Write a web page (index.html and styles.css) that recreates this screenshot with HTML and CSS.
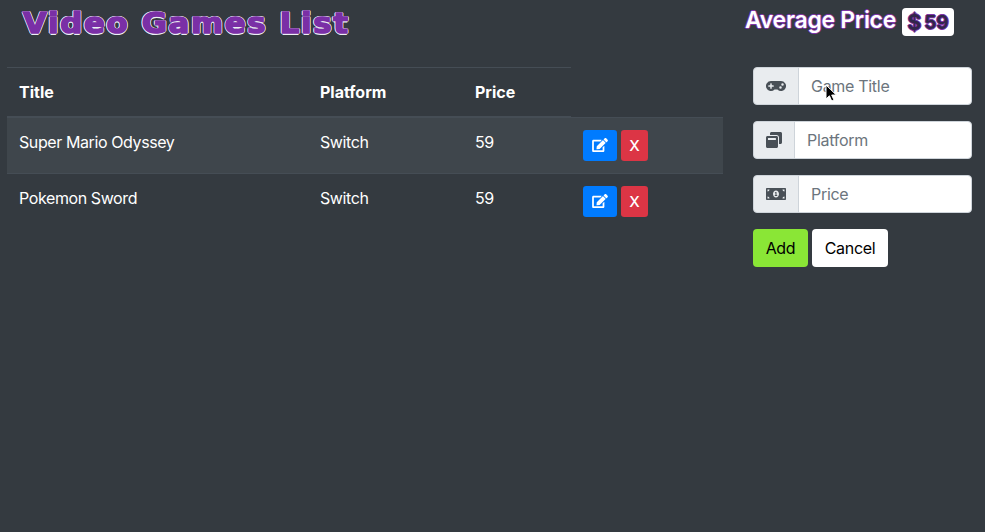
FILE: index.html
```html
<!doctype html>
<html lang="en">
<head>
  <title>Video Games List</title>
  <meta charset="utf-8">
  <link rel="stylesheet" href="styles.css">
</head>
<body>

<header class="top-bar">
  <h1 class="app-title">Video Games List</h1>
  <div class="average">
    <span class="average-label">Average Price</span>
    <span class="average-badge"><span class="dollar">$</span>59</span>
  </div>
</header>

<main class="content">
  <table class="games">
    <colgroup>
      <col class="col-title">
      <col class="col-platform">
      <col class="col-price">
      <col class="col-actions">
    </colgroup>
    <thead>
      <tr>
        <th>Title</th>
        <th>Platform</th>
        <th>Price</th>
      </tr>
    </thead>
    <tbody>
      <tr class="hovered">
        <td>Super Mario Odyssey</td>
        <td>Switch</td>
        <td>59</td>
        <td>
          <div class="actions">
            <button class="btn btn-edit" type="button" aria-label="Edit">
              <svg class="icon-edit" viewBox="0 0 576 512"><path d="M402.6 83.2l90.2 90.2c3.8 3.8 3.8 10 0 13.8L274.4 405.6l-92.8 10.3c-12.4 1.4-22.9-9.1-21.5-21.5l10.3-92.8L388.8 83.2c3.8-3.8 10-3.8 13.8 0zm162-22.9l-48.8-48.8c-15.2-15.2-39.9-15.2-55.2 0l-35.4 35.4c-3.8 3.8-3.8 10 0 13.8l90.2 90.2c3.8 3.8 10 3.8 13.8 0l35.4-35.4c15.2-15.3 15.2-40 0-55.2zM384 346.2V448H64V128h229.8c3.2 0 6.2-1.3 8.5-3.5l40-40c7.6-7.6 2.2-20.5-8.5-20.5H48C21.5 64 0 85.5 0 112v352c0 26.5 21.5 48 48 48h352c26.5 0 48-21.5 48-48V306.2c0-10.7-12.9-16-20.5-8.5l-40 40c-2.2 2.3-3.5 5.3-3.5 8.5z"/></svg>
            </button>
            <button class="btn btn-delete" type="button">X</button>
          </div>
        </td>
      </tr>
      <tr>
        <td>Pokemon Sword</td>
        <td>Switch</td>
        <td>59</td>
        <td>
          <div class="actions">
            <button class="btn btn-edit" type="button" aria-label="Edit">
              <svg class="icon-edit" viewBox="0 0 576 512"><path d="M402.6 83.2l90.2 90.2c3.8 3.8 3.8 10 0 13.8L274.4 405.6l-92.8 10.3c-12.4 1.4-22.9-9.1-21.5-21.5l10.3-92.8L388.8 83.2c3.8-3.8 10-3.8 13.8 0zm162-22.9l-48.8-48.8c-15.2-15.2-39.9-15.2-55.2 0l-35.4 35.4c-3.8 3.8-3.8 10 0 13.8l90.2 90.2c3.8 3.8 10 3.8 13.8 0l35.4-35.4c15.2-15.3 15.2-40 0-55.2zM384 346.2V448H64V128h229.8c3.2 0 6.2-1.3 8.5-3.5l40-40c7.6-7.6 2.2-20.5-8.5-20.5H48C21.5 64 0 85.5 0 112v352c0 26.5 21.5 48 48 48h352c26.5 0 48-21.5 48-48V306.2c0-10.7-12.9-16-20.5-8.5l-40 40c-2.2 2.3-3.5 5.3-3.5 8.5z"/></svg>
            </button>
            <button class="btn btn-delete" type="button">X</button>
          </div>
        </td>
      </tr>
    </tbody>
  </table>

  <form class="game-form">
    <div class="input-group">
      <span class="addon">
        <svg class="icon-addon" viewBox="0 0 640 512"><path d="M480.07 96H160a160 160 0 1 0 114.24 272h91.52A160 160 0 1 0 480.07 96zM248 268a12 12 0 0 1-12 12h-52v52a12 12 0 0 1-12 12h-24a12 12 0 0 1-12-12v-52H84a12 12 0 0 1-12-12v-24a12 12 0 0 1 12-12h52v-52a12 12 0 0 1 12-12h24a12 12 0 0 1 12 12v52h52a12 12 0 0 1 12 12zm216 76a40 40 0 1 1 40-40 40 40 0 0 1-40 40zm64-96a40 40 0 1 1 40-40 40 40 0 0 1-40 40z"/></svg>
      </span>
      <input type="text" placeholder="Game Title">
      <svg class="cursor" viewBox="0 0 12 18"><path d="M1 1v14l3.4-3.2 2.3 5.2 2.3-1-2.3-5h4.6z" stroke="#fff" stroke-width="1"/></svg>
    </div>
    <div class="input-group">
      <span class="addon">
        <svg class="icon-addon icon-window" viewBox="0 0 512 512"><path d="M512 48v288c0 26.5-21.5 48-48 48h-48V176c0-44.1-35.9-80-80-80H128V48c0-26.5 21.5-48 48-48h288c26.5 0 48 21.5 48 48zM384 176v288c0 26.5-21.5 48-48 48H48c-26.5 0-48-21.5-48-48V176c0-26.5 21.5-48 48-48h288c26.5 0 48 21.5 48 48zm-68 28c0-6.6-5.4-12-12-12H76c-6.6 0-12 5.4-12 12v52h252v-52z"/></svg>
      </span>
      <input type="text" placeholder="Platform">
    </div>
    <div class="input-group">
      <span class="addon">
        <svg class="icon-addon" viewBox="0 0 640 512"><path d="M352 288h-16v-88c0-4.42-3.58-8-8-8h-13.58c-4.74 0-9.37 1.4-13.31 4.03l-15.33 10.22a7.994 7.994 0 0 0-2.22 11.09l8.88 13.31a7.994 7.994 0 0 0 11.09 2.22l.47-.31V288h-16c-4.42 0-8 3.58-8 8v16c0 4.42 3.58 8 8 8h64c4.42 0 8-3.58 8-8v-16c0-4.42-3.58-8-8-8zM608 64H32C14.33 64 0 78.33 0 96v320c0 17.67 14.33 32 32 32h576c17.67 0 32-14.33 32-32V96c0-17.67-14.33-32-32-32zM48 400v-64c35.35 0 64 28.65 64 64H48zm0-224v-64h64c0 35.35-28.65 64-64 64zm272 192c-53 0-96-50.15-96-112 0-61.86 43-112 96-112s96 50.14 96 112c0 61.87-43.02 112-96 112zm272 32h-64c0-35.35 28.65-64 64-64v64zm0-224c-35.35 0-64-28.65-64-64h64v64z"/></svg>
      </span>
      <input type="text" placeholder="Price">
    </div>
    <div class="form-buttons">
      <button class="btn-form btn-add" type="button">Add</button>
      <button class="btn-form btn-cancel" type="button">Cancel</button>
    </div>
  </form>
</main>

</body>
</html>
```

FILE: styles.css
```css
:root {
  --background-color: #343a40;
  --border-color: #454d55;
  --hover-color: #3f464c;
  --accent-purple: #7a2fa6;
}
html {
  box-sizing: border-box;
  font-family: Inter, "Liberation Sans", Arial, sans-serif;
  font-size: 16px;
}
*, *:before, *:after {
  box-sizing: inherit;
}
body {
  margin: 0;
  height: 532px;
  overflow: hidden;
  background-color: var(--background-color);
  color: #fff;
}
.top-bar {
  display: flex;
  justify-content: space-between;
  align-items: flex-start;
  height: 67px;
  padding: 8px 31px 0 23px;
}
.app-title {
  margin: 0;
  font-family: "DejaVu Sans", sans-serif;
  font-size: 29px;
  font-weight: 700;
  line-height: 30px;
  letter-spacing: 1.6px;
  color: var(--accent-purple);
  transform: scaleX(1.06);
  transform-origin: left center;
  -webkit-text-stroke: 1.6px var(--accent-purple);
  text-shadow: 1px 1px 0 #eef0f5, -1px 1px 0 #eef0f5, 1px -1px 0 #eef0f5, -1px -1px 0 #eef0f5, 1.5px 0 0 #eef0f5, -1.5px 0 0 #eef0f5, 0 1.5px 0 #eef0f5, 0 -1.5px 0 #eef0f5;
}
.average {
  display: flex;
  align-items: flex-start;
  gap: 6px;
}
.average-label {
  font-size: 23px;
  font-weight: 600;
  line-height: 24px;
  letter-spacing: -0.3px;
  color: #fff;
  text-shadow: 1px 0 0 #7f35a8, -1px 0 0 #7f35a8, 0 1px 0 #7f35a8, 0 -1px 0 #7f35a8;
}
.average-badge {
  display: flex;
  align-items: center;
  justify-content: center;
  gap: 3px;
  width: 52px;
  height: 28px;
  background-color: #fff;
  border-radius: 4px;
  font-size: 19px;
  font-weight: 700;
  color: #32264a;
  text-shadow: 1px 0 0 #7f35a8, -1px 0 0 #7f35a8, 0 1px 0 #7f35a8, 0 -1px 0 #7f35a8;
}
.dollar {
  font-size: 21px;
}
.content {
  display: flex;
  align-items: flex-start;
  padding-left: 7px;
}
.games {
  width: 716px;
  table-layout: fixed;
  border-collapse: collapse;
}
.col-title {
  width: 301px;
}
.col-platform {
  width: 155px;
}
.col-price {
  width: 108px;
}
.col-actions {
  width: 152px;
}
.games th,
.games td {
  padding: 12px;
  line-height: 24px;
  text-align: left;
  vertical-align: top;
}
.games th {
  font-weight: 700;
  border-top: 1px solid var(--border-color);
  border-bottom: 2px solid var(--border-color);
}
.games td {
  font-weight: 400;
  letter-spacing: -0.4px;
  border-top: 1px solid var(--border-color);
}
.hovered {
  background-color: var(--hover-color);
}
.actions {
  display: flex;
  gap: 4px;
}
.btn {
  display: flex;
  align-items: center;
  justify-content: center;
  height: 31px;
  padding: 0;
  border: 0;
  border-radius: 3.2px;
  color: #fff;
  font-family: inherit;
  font-size: 15px;
  font-weight: 500;
}
.btn-edit {
  width: 34px;
  background-color: #007bff;
}
.btn-delete {
  width: 27px;
  background-color: #dc3545;
}
.icon-edit {
  width: 16px;
  height: 14px;
  fill: #fff;
}
.game-form {
  display: flex;
  flex-direction: column;
  gap: 16px;
  width: 219px;
  margin-left: 30px;
}
.input-group {
  position: relative;
  display: flex;
  height: 38px;
}
.addon {
  display: flex;
  align-items: center;
  padding: 0 12px;
  background-color: #e9ecef;
  border: 1px solid #ced4da;
  border-radius: 4px 0 0 4px;
}
.icon-addon {
  width: 20px;
  height: 16px;
  fill: #495057;
}
.icon-window {
  width: 16px;
}
.input-group input {
  flex: 1;
  min-width: 0;
  padding: 6px 12px;
  margin-left: -1px;
  border: 1px solid #ced4da;
  border-radius: 0 4px 4px 0;
  background-color: #fff;
  font-family: inherit;
  font-size: 16px;
  letter-spacing: -0.3px;
  color: #495057;
}
.input-group input::placeholder {
  color: #6c757d;
  opacity: 1;
}
.cursor {
  position: absolute;
  left: 72px;
  top: 17px;
  width: 12px;
  height: 18px;
  fill: #000;
}
.form-buttons {
  display: flex;
  gap: 4px;
}
.btn-form {
  height: 38px;
  padding: 0;
  border: 0;
  border-radius: 4px;
  color: #000;
  font-family: inherit;
  font-size: 16px;
  letter-spacing: -0.3px;
}
.btn-add {
  width: 55px;
  background-color: #8ae636;
}
.btn-cancel {
  width: 76px;
  background-color: #fff;
}
```
